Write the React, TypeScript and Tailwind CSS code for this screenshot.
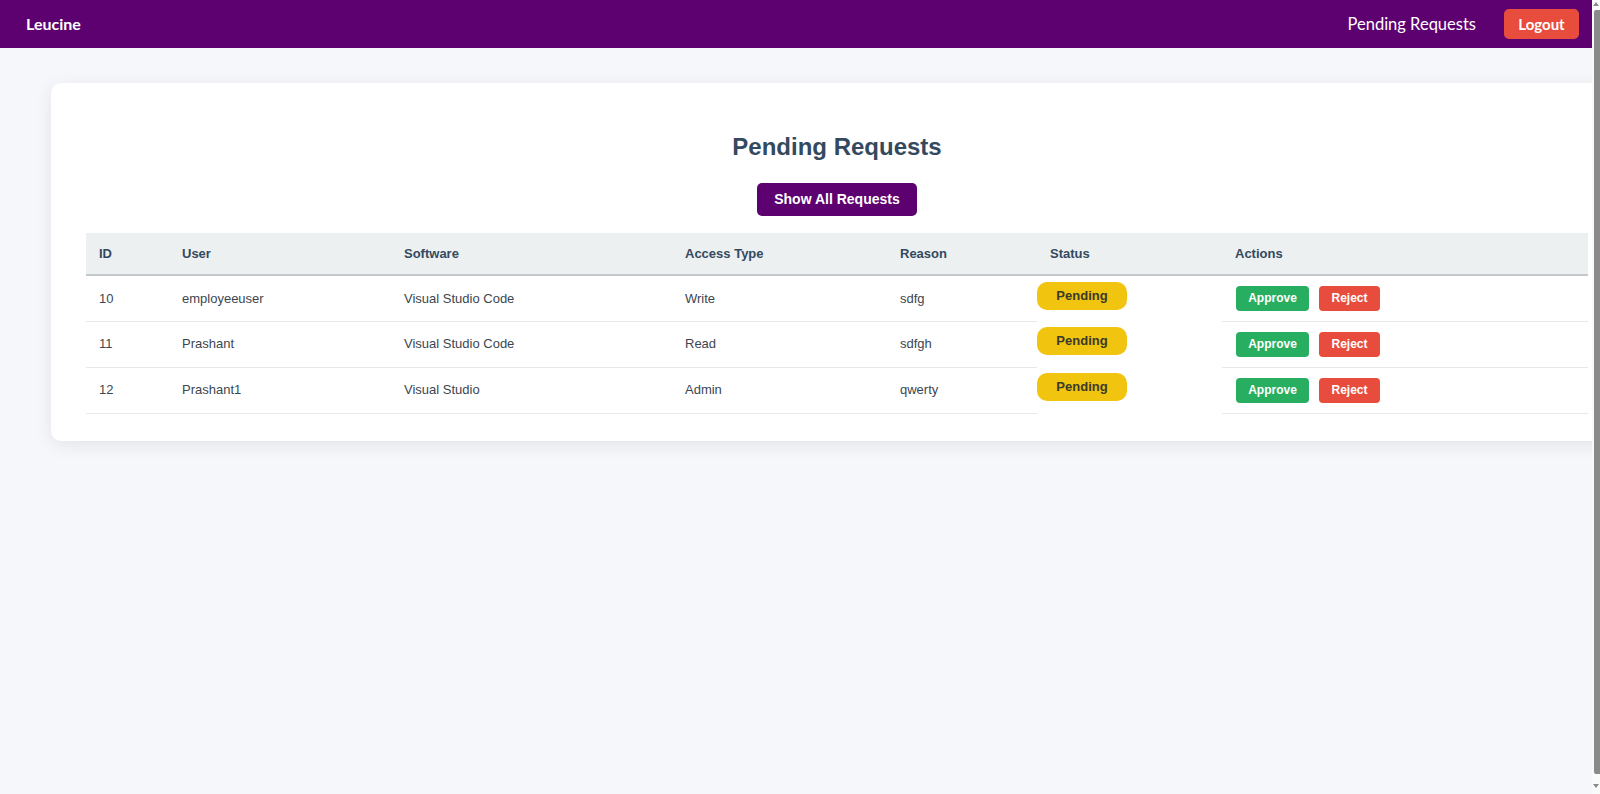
const requests = [
  { id: 10, user: 'employeeuser', software: 'Visual Studio Code', access: 'Write', reason: 'sdfg' },
  { id: 11, user: 'Prashant', software: 'Visual Studio Code', access: 'Read', reason: 'sdfgh' },
  { id: 12, user: 'Prashant1', software: 'Visual Studio', access: 'Admin', reason: 'qwerty' },
];

function Navbar() {
  return (
    <nav className="h-12 shrink-0 bg-[#5c016f] flex items-center justify-between pl-[26px] pr-[13px] font-['Lato',sans-serif] text-white">
      <span className="text-[16px] font-bold">Leucine</span>
      <div className="flex items-center gap-[28px]">
        <a className="text-[16.5px] cursor-pointer">Pending Requests</a>
        <button className="h-[30px] w-[75px] rounded-[5px] bg-[#e74c3c] text-[15px] font-bold text-white">
          Logout
        </button>
      </div>
    </nav>
  );
}

export default function App() {
  return (
    <div className="flex h-screen overflow-hidden bg-[#f5f7fa]">
      <div className="flex-1 min-w-0 flex flex-col overflow-hidden">
        <Navbar />

        {/* Card with pending requests table */}
        <div className="ml-[51px] mt-[35px] w-[1572px] shrink-0 bg-white rounded-[10px] shadow-[0_4px_18px_rgba(0,0,0,0.08)] px-[35px] pt-[50px] pb-[27px] font-['Liberation_Sans',Arial,sans-serif]">
          <h2 className="text-center text-[24px] leading-[28px] font-bold text-[#34495e]">Pending Requests</h2>
          <div className="flex justify-center mt-[22px]">
            <button className="h-[33px] px-[17px] rounded-[5px] bg-[#5c016f] text-white text-[14px] font-bold">
              Show All Requests
            </button>
          </div>

          <table className="mt-[17px] w-full table-fixed border-collapse text-[13px]">
            <colgroup>
              <col className="w-[83px]" />
              <col className="w-[222px]" />
              <col className="w-[281px]" />
              <col className="w-[215px]" />
              <col className="w-[150px]" />
              <col className="w-[185px]" />
              <col />
            </colgroup>
            <thead>
              <tr className="h-[42px] bg-[#ecf0f1] border-b-2 border-[#c3c8cc] text-left text-[#34495e]">
                <th className="px-[13px] font-bold">ID</th>
                <th className="px-[13px] font-bold">User</th>
                <th className="px-[13px] font-bold">Software</th>
                <th className="px-[13px] font-bold">Access Type</th>
                <th className="px-[13px] font-bold">Reason</th>
                <th className="px-[13px] font-bold">Status</th>
                <th className="px-[13px] font-bold">Actions</th>
              </tr>
            </thead>
            <tbody className="text-[#3c4650]">
              {requests.map((r) => (
                <tr key={r.id} className="h-[46px]">
                  <td className="px-[13px] border-b border-[#e6e8ea]">{r.id}</td>
                  <td className="px-[13px] border-b border-[#e6e8ea]">{r.user}</td>
                  <td className="px-[13px] border-b border-[#e6e8ea]">{r.software}</td>
                  <td className="px-[13px] border-b border-[#e6e8ea]">{r.access}</td>
                  <td className="px-[13px] border-b border-[#e6e8ea]">{r.reason}</td>
                  <td className="p-0 align-top">
                    <div className="mt-[6px] w-[90px] h-[28px] rounded-[10px] bg-[#f1c40f] flex items-center justify-center font-bold text-[13px] text-[#3a3a2a]">
                      Pending
                    </div>
                  </td>
                  <td className="px-[14px] border-b border-[#e6e8ea]">
                    <div className="flex gap-[10px]">
                      <button className="h-[25px] w-[73px] rounded-[4px] bg-[#27ae60] text-white text-[12px] font-bold">
                        Approve
                      </button>
                      <button className="h-[25px] w-[61px] rounded-[4px] bg-[#e74c3c] text-white text-[12px] font-bold">
                        Reject
                      </button>
                    </div>
                  </td>
                </tr>
              ))}
            </tbody>
          </table>
        </div>
      </div>

      {/* browser scrollbar */}
      <div className="w-[8px] shrink-0 bg-[#fafafa] flex flex-col items-end">
        <div className="w-0 h-0 mt-[2px] mr-[1px] border-l-[3px] border-r-[3px] border-b-[4px] border-l-transparent border-r-transparent border-b-[#8a8a8a]" />
        <div className="mt-[4px] w-[6px] h-[764px] rounded-l-[2px] bg-[#8a8a8a]" />
        <div className="mt-auto mb-[6px] mr-[1px] w-0 h-0 border-l-[3px] border-r-[3px] border-t-[4px] border-l-transparent border-r-transparent border-t-[#8a8a8a]" />
      </div>
    </div>
  );
}
